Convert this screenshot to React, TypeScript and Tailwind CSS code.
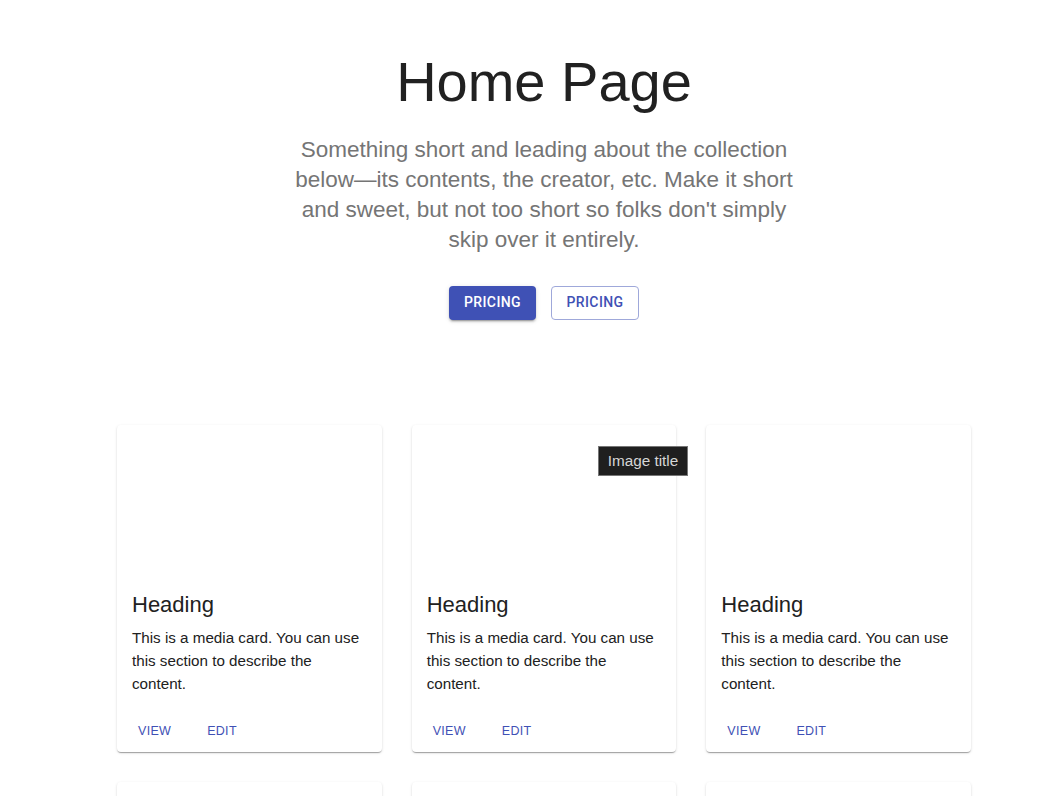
const cards = [1, 2, 3, 4, 5, 6];

function Card({ tooltip }: { tooltip?: boolean }) {
  return (
    <div className="relative flex h-[327px] flex-col rounded bg-white shadow-[0_2px_1px_-1px_rgba(0,0,0,0.2),0_1px_1px_0_rgba(0,0,0,0.14),0_1px_3px_0_rgba(0,0,0,0.12)]">
      <div className="h-[148px]" />
      {tooltip && (
        <div className="absolute left-[186px] top-[21px] whitespace-nowrap border border-[#767676] bg-[#1f1f1f] px-[9px] py-[5px] text-[15.3px] leading-[18px] text-[#d6d6d6]">
          Image title
        </div>
      )}
      <div className="flex-1 px-[15px] pt-4">
        <h2 className="text-[22px] leading-[32px] text-[#212121]">Heading</h2>
        <p className="mt-[5px] text-[15.2px] leading-[23px] text-[#212121]">
          This is a media card. You can use this section to describe the
          content.
        </p>
      </div>
      <div className="flex items-center pb-[11px] pl-[21px] text-[12.5px] tracking-[0.3px] text-[#3f51b5]">
        <span>VIEW</span>
        <span className="ml-[36px]">EDIT</span>
      </div>
    </div>
  );
}

export default function App() {
  return (
    <div className="min-h-screen bg-white pl-[48px] font-['Liberation_Sans',Arial,sans-serif]">
      <div className="flex flex-col items-center pt-[46px]">
        <h1 className="text-[56px] leading-[72px] text-[#212121]">Home Page</h1>
        <p className="mt-[17px] max-w-[512px] text-center text-[22.5px] leading-[30px] text-[#757575]">
          Something short and leading about the collection below—its contents,
          the creator, etc. Make it short and sweet, but not too short so folks
          don't simply skip over it entirely.
        </p>
        <div className="mt-[31px] flex gap-[15px] font-['Roboto',sans-serif] text-[14px] font-medium tracking-[0.4px]">
          <button className="h-[34px] w-[87px] rounded bg-[#3f51b5] pb-[2px] text-white shadow-[0_3px_1px_-2px_rgba(0,0,0,0.2),0_2px_2px_0_rgba(0,0,0,0.14),0_1px_5px_0_rgba(0,0,0,0.12)]">
            PRICING
          </button>
          <button className="h-[34px] w-[88px] rounded border border-[#9fa8da] pb-[2px] text-[#3f51b5]">
            PRICING
          </button>
        </div>
      </div>
      <div className="mx-auto mt-[105px] grid w-[854px] grid-cols-3 gap-[30px] pb-10">
        {cards.map((c) => (
          <Card key={c} tooltip={c === 2} />
        ))}
      </div>
    </div>
  );
}
